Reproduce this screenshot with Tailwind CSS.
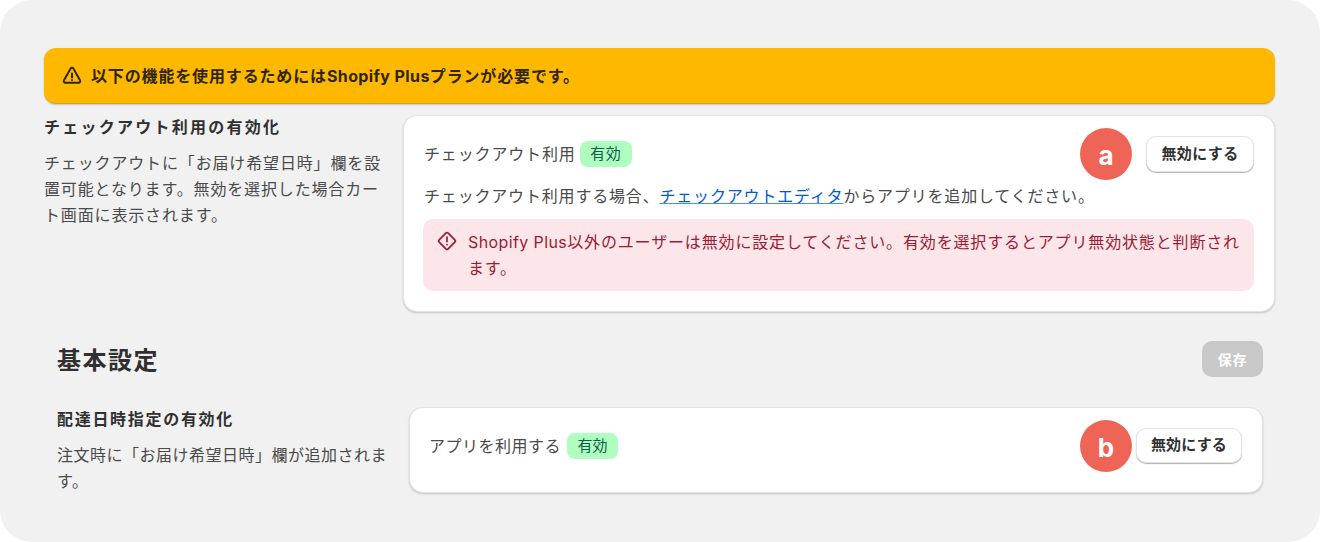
<!DOCTYPE html>
<html lang="ja">
<head>
  <meta charset="UTF-8">
  <title>チェックアウト設定</title>
  <script src="https://cdn.jsdelivr.net/npm/@tailwindcss/browser@4"></script>
</head>
<body class="bg-white font-['Inter','Noto_Sans_CJK_JP',sans-serif] text-[#303030]">
  <div class="w-[1320px] h-[542px] overflow-hidden bg-[#f1f1f1] rounded-[32px] pt-[48px] pl-[44px] pr-[45px]">

    <!-- 警告バナー -->
    <div class="h-[56px] flex items-center gap-[8px] pl-[17px] rounded-[12px] bg-[#ffb800] border-b border-[#e0a200] shadow-[0_1px_2px_rgba(0,0,0,0.2)]">
      <svg class="w-[22px] h-[22px] text-[#2f2500]" viewBox="0 0 20 20" fill="none" stroke="currentColor" stroke-width="1.8" stroke-linejoin="round" stroke-linecap="round">
        <path d="M8.7 3.3a1.5 1.5 0 0 1 2.6 0l6 10.6a1.5 1.5 0 0 1-1.3 2.2H4a1.5 1.5 0 0 1-1.3-2.2l6-10.6Z"/>
        <path d="M10 7.8v3.6"/>
        <path d="M10 13.7v.1"/>
      </svg>
      <p class="text-[16px] tracking-[0.85px] font-bold text-[#2f2500]">以下の機能を使用するためには<span class="tracking-[0.4px]">Shopify Plus</span>プランが必要です。</p>
    </div>

    <!-- チェックアウト利用 -->
    <section class="flex mt-[11px]">
      <div class="w-[359px] shrink-0">
        <h2 class="text-[16px] leading-[24px] tracking-[2.25px] font-bold">チェックアウト利用の有効化</h2>
        <p class="mt-[11px] w-[345px] text-[16px] leading-[26px] tracking-[0.85px] text-[#4a4a4a]">チェックアウトに「お届け希望日時」欄を設置可能となります。無効を選択した場合カート画面に表示されます。</p>
      </div>
      <div class="relative flex-1 h-[197px] bg-white rounded-[14px] border border-[#e3e3e3] shadow-[0_1px_2px_rgba(0,0,0,0.2)] pl-[19px] pr-[20px] pt-[25px]">
        <div class="flex items-center h-[26px]">
          <span class="ml-[1px] text-[16px] tracking-[0.85px] text-[#4a4a4a]">チェックアウト利用</span>
          <span class="ml-[4px] h-[26px] w-[52px] flex items-center justify-center rounded-[8px] bg-[#affebf] text-[15px] tracking-[0.5px] text-[#0f5c4d]">有効</span>
        </div>
        <p class="ml-[1px] mt-[16px] h-[26px] text-[16px] leading-[26px] tracking-[0.82px] text-[#4a4a4a]">チェックアウト利用する場合、<a href="#" class="text-[#005bd3] underline decoration-[#4a8fe0]">チェックアウトエディタ</a>からアプリを追加してください。</p>
        <div class="mt-[10px] flex gap-[11px] h-[72px] rounded-[10px] bg-[#fde6e9] pl-[14px] pr-[11px] pt-[10px]">
          <svg class="w-[20px] h-[20px] mt-[2px] shrink-0 text-[#9a1b33]" viewBox="0 0 20 20" fill="none" stroke="currentColor" stroke-width="1.7" stroke-linecap="round" stroke-linejoin="round">
            <path d="M8.8 2.2a1.7 1.7 0 0 1 2.4 0l6.6 6.6a1.7 1.7 0 0 1 0 2.4l-6.6 6.6a1.7 1.7 0 0 1-2.4 0l-6.6-6.6a1.7 1.7 0 0 1 0-2.4l6.6-6.6Z"/>
            <path d="M10 6v4.6"/>
            <path d="M10 13.6v.1"/>
          </svg>
          <p class="text-[16px] leading-[26px] tracking-[0.85px] text-[#9a1b33]"><span class="tracking-[0.4px]">Shopify Plus</span>以外のユーザーは無効に設定してください。有効を選択するとアプリ無効状態と判断されます。</p>
        </div>
        <span class="absolute left-[676px] top-[12px] w-[52px] h-[52px] pt-[3px] rounded-full bg-[#ee6558] text-white text-[26px] font-bold flex items-center justify-center">a</span>
        <button class="absolute right-[20px] top-[20px] w-[108px] h-[36px] rounded-[10px] bg-white border border-[#e3e3e3] shadow-[0_1px_1px_rgba(0,0,0,0.3)] text-[15px] font-semibold tracking-[0.4px]">無効にする</button>
      </div>
    </section>

    <!-- 基本設定 -->
    <div class="flex items-center justify-between mt-[29px] pl-[13px] pr-[12px] h-[36px]">
      <h1 class="pt-[3px] text-[24px] tracking-[1.5px] font-bold">基本設定</h1>
      <button class="w-[61px] h-[36px] rounded-[10px] bg-[#c8c8c8] text-white text-[14px] font-semibold tracking-[0.7px]">保存</button>
    </div>

    <section class="flex mt-[30px] pl-[13px] pr-[12px]">
      <div class="w-[352px] shrink-0">
        <h2 class="text-[16px] leading-[24px] tracking-[1.7px] font-bold">配達日時指定の有効化</h2>
        <p class="mt-[11px] w-[335px] text-[16px] leading-[26px] tracking-[0.5px] text-[#4a4a4a]">注文時に「お届け希望日時」欄が追加されます。</p>
      </div>
      <div class="relative flex-1 h-[86px] bg-white rounded-[14px] border border-[#e3e3e3] shadow-[0_1px_2px_rgba(0,0,0,0.2)] pl-[19px] pt-[25px]">
        <div class="flex items-center h-[26px]">
          <span class="text-[16px] tracking-[0.5px] text-[#4a4a4a]">アプリを利用する</span>
          <span class="ml-[6px] h-[26px] w-[51px] flex items-center justify-center rounded-[8px] bg-[#affebf] text-[15px] text-[#0f5c4d]">有効</span>
        </div>
        <span class="absolute left-[670px] top-[12px] w-[52px] h-[52px] pt-[3px] rounded-full bg-[#ee6558] text-white text-[26px] font-bold flex items-center justify-center">b</span>
        <button class="absolute right-[20px] top-[20px] w-[106px] h-[35px] rounded-[10px] bg-white border border-[#e3e3e3] shadow-[0_1px_1px_rgba(0,0,0,0.3)] text-[15px] font-semibold tracking-[0.2px]">無効にする</button>
      </div>
    </section>
  </div>
</body>
</html>
